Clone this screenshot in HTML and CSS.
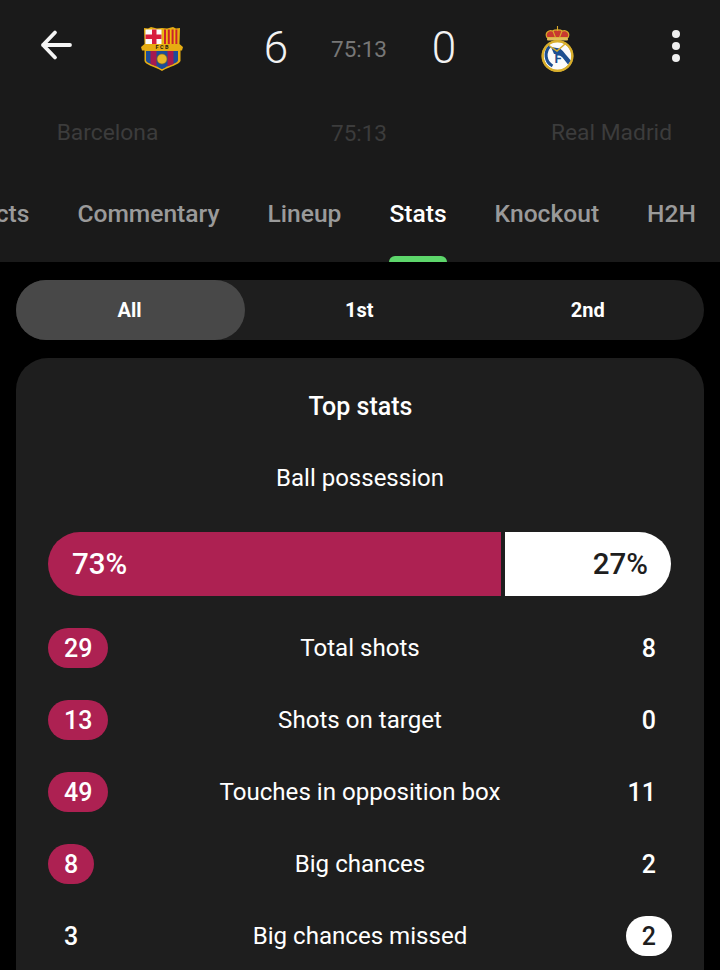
FILE: index.html
```html
<!DOCTYPE html>
<html lang="en">
<head>
<meta charset="utf-8">
<title>Barcelona vs Real Madrid</title>
<link rel="stylesheet" href="styles.css">
</head>
<body>
<header class="match-header">
  <div class="score-row">
    <div class="cell">
      <svg class="back-icon" viewBox="0 0 32 32" width="32" height="32"><path d="M30 16H3M15 3.500 3 16l12 12.500" fill="none" stroke="#f5f5f5" stroke-width="3.800" stroke-linecap="round" stroke-linejoin="round"/></svg>
    </div>
    <div class="cell">
      <svg class="crest" viewBox="0 -1 42 46" width="42" height="46">
        <path d="M3 1l4 .5L10 0l6 1.500L21 1l5 .5L32 0l3 1.500L39 1l-.500 16 3.500 3 -1 3.500h-1.500V34C38 38 29 39 21 44 13 39 4 38 3.500 34V23.500H1L0 20l3.500-3z" fill="#e6ad12"/>
        <rect x="4.500" y="2.500" width="16" height="14.500" fill="#fbfbfb"/>
        <rect x="11" y="2.500" width="4.500" height="14.500" fill="#d81f3f"/>
        <rect x="4.500" y="7.500" width="16" height="4.500" fill="#d81f3f"/>
        <rect x="22" y="2.500" width="15" height="14.500" fill="#eeb90f"/>
        <path d="M24 2.500V17M27.800 2.500V17M31.600 2.500V17M35.400 2.500V17" stroke="#c9222c" stroke-width="2"/>
        <text class="fcb" x="21" y="22.300" text-anchor="middle">F C B</text>
        <path d="M5 24h32v9.500c-.500 3-8.500 4-16 8.500C13.500 37.500 5.500 36.500 5 33.500z" fill="#1c4d99"/>
        <path d="M9.500 24h6v15.500l-6-2.500zM26.500 24h6v13l-6 2.500z" fill="#a61a4f"/>
        <path d="M17.500 24h7v16.500L21 42l-3.500-1.500z" fill="#1c4d99"/>
        <circle cx="21" cy="32" r="5" fill="#e9b92a" stroke="#8a6a10" stroke-width=".6"/>
      </svg>
    </div>
    <div class="cell score">6</div>
    <div class="cell clock">75:13</div>
    <div class="cell score">0</div>
    <div class="cell">
      <svg class="crest" viewBox="0 0 33 46" width="33" height="46">
        <path d="M6 11.500C3.500 7 8 3.500 11.500 5c2-1.500 8-1.500 10 0 3.500-1.500 8 2 5.500 6.500z" fill="#c8392f" stroke="#d9a92b" stroke-width="1.200"/>
        <path d="M16.500 0v5M12 5l2.500 6.500M21 5l-2.500 6.500" stroke="#d9a92b" stroke-width="1.100"/>
        <rect x="6" y="11.500" width="21" height="3" rx="1" fill="#e0bd5c"/>
        <circle cx="16.500" cy="30" r="16" fill="#d8ae2c"/>
        <circle cx="16.500" cy="30" r="13.700" fill="#fbfbfb"/>
        <path d="M9 20c-6 6-5 16 2.500 20" fill="none" stroke="#1d4f91" stroke-width="3"/>
        <path d="M10 21 19 22.500c4 3 7 8 10.800 12L27 38.500 21.500 31.500c-3-3-6-4-8.500-3.500z" fill="#1d4f91"/>
        <path d="M8 19.500l8 5.500 8-7" fill="none" stroke="#d8ae2c" stroke-width="1.500"/>
        <circle cx="16.500" cy="30" r="14.800" fill="none" stroke="#d8ae2c" stroke-width="2"/>
        <text class="rm" x="17" y="37" text-anchor="middle">F</text>
      </svg>
    </div>
    <div class="cell">
      <div class="dots"><span class="dot"></span><span class="dot"></span><span class="dot"></span></div>
    </div>
  </div>
  <div class="names-row">
    <span class="name-text">Barcelona</span>
    <span class="clock-faded">75:13</span>
    <span class="name-text">Real Madrid</span>
  </div>
  <nav class="tabs">
    <div class="tab">Facts</div>
    <div class="tab">Commentary</div>
    <div class="tab">Lineup</div>
    <div class="tab active">Stats<span class="indicator"></span></div>
    <div class="tab">Knockout</div>
    <div class="tab">H2H</div>
  </nav>
</header>
<main class="content">
  <div class="segments">
    <div class="segment selected">All</div>
    <div class="segment">1st</div>
    <div class="segment">2nd</div>
  </div>
  <section class="card">
    <h2 class="card-title">Top stats</h2>
    <div class="possession-label">Ball possession</div>
    <div class="possession-bar">
      <div class="share home">73%</div>
      <div class="share away">27%</div>
    </div>
    <div class="stat"><div class="val left"><span class="pill red">29</span></div><div class="name">Total shots</div><div class="val right"><span class="pill">8</span></div></div>
    <div class="stat"><div class="val left"><span class="pill red">13</span></div><div class="name">Shots on target</div><div class="val right"><span class="pill">0</span></div></div>
    <div class="stat"><div class="val left"><span class="pill red">49</span></div><div class="name">Touches in opposition box</div><div class="val right"><span class="pill">11</span></div></div>
    <div class="stat"><div class="val left"><span class="pill red">8</span></div><div class="name">Big chances</div><div class="val right"><span class="pill">2</span></div></div>
    <div class="stat"><div class="val left"><span class="pill">3</span></div><div class="name">Big chances missed</div><div class="val right"><span class="pill white">2</span></div></div>
  </section>
</main>
</body>
</html>
```
FILE: styles.css
```css
* { box-sizing: border-box; }
html, body { margin: 0; height: 100%; }
body {
  width: 720px;
  height: 970px;
  overflow: hidden;
  background: #000;
  color: #fff;
  font-family: Roboto, "Liberation Sans", sans-serif;
}
.match-header {
  height: 262px;
  background: #1a1a1a;
  overflow: hidden;
}
.score-row {
  display: grid;
  grid-template-columns: 56px 156px 72px 94px 76px 150px 88px;
  padding: 22px 0 0 28px;
  height: 96px;
}
.cell {
  display: flex;
  align-items: flex-start;
  justify-content: center;
}
.back-icon { margin-top: 7px; }
.crest { margin-top: 4px; }
.score {
  font-size: 44px;
  font-weight: 300;
  line-height: 52px;
  color: #f2f2f2;
}
.clock {
  font-size: 22.500px;
  line-height: 26px;
  color: #777;
  padding-top: 14px;
}
.dots {
  display: flex;
  flex-direction: column;
  gap: 4px;
  margin-top: 8px;
}
.dot {
  width: 8px;
  height: 8px;
  border-radius: 50%;
  background: #efefef;
}
.fcb { font: 700 5.500px Roboto, sans-serif; fill: #1a1a1a; }
.rm { font: 700 13px Roboto, sans-serif; fill: #1d4f91; }
.names-row {
  display: grid;
  grid-template-columns: 215px 288px 217px;
  align-items: center;
  text-align: center;
  line-height: 26px;
  color: #3c3c3c;
  padding-top: 24px;
}
.name-text { font-size: 22.800px; }
.clock-faded { font-size: 22.500px; }
.tabs {
  display: flex;
  justify-content: flex-end;
  gap: 48px;
  padding-right: 24px;
  margin-top: 54px;
  height: 62px;
}
.tab {
  flex-shrink: 0;
  display: flex;
  flex-direction: column;
  justify-content: space-between;
  font-size: 24.600px;
  font-weight: 500;
  line-height: 28px;
  color: #9a9a9a;
}
.tab.active { color: #fff; }
.indicator {
  display: block;
  height: 6px;
  background: #5dd66b;
  border-radius: 6px 6px 0 0;
}
.content { padding: 18px 16px 0; }
.segments {
  display: grid;
  grid-template-columns: 229px 1fr 1fr;
  height: 60px;
  padding-right: 2px;
  background: #1e1e1e;
  border-radius: 30px;
}
.segment {
  display: flex;
  align-items: center;
  justify-content: center;
  font-size: 20px;
  font-weight: 700;
  border-radius: 30px;
}
.segment.selected { background: #484848; padding-right: 2px; }
.card {
  margin-top: 18px;
  padding: 0 32px;
  height: 640px;
  background: #1e1e1e;
  border-radius: 32px 32px 0 0;
}
.card-title {
  margin: 0;
  padding: 33px 0 0 1px;
  text-align: center;
  font-size: 25px;
  font-weight: 500;
  line-height: 32px;
}
.possession-label {
  margin-top: 41px;
  text-align: center;
  font-size: 24px;
  line-height: 28px;
}
.possession-bar {
  display: flex;
  gap: 4px;
  height: 64px;
  margin: 40px 1px 32px 0;
}
.share {
  display: flex;
  align-items: center;
  font-size: 29.500px;
  font-weight: 500;
}
.home {
  width: 453px;
  padding-left: 24px;
  background: #ad2152;
  border-radius: 32px 0 0 32px;
}
.away {
  flex: 1;
  justify-content: flex-end;
  padding-right: 23px;
  background: #fff;
  color: #1e1e1e;
  border-radius: 0 32px 32px 0;
}
.stat {
  display: grid;
  grid-template-columns: 80px 1fr 80px;
  align-items: center;
  height: 40px;
  margin-bottom: 32px;
}
.name {
  text-align: center;
  font-size: 24.100px;
  line-height: 28px;
}
.val { display: flex; }
.right { justify-content: flex-end; }
.pill {
  min-width: 46px;
  height: 40px;
  padding: 0 16px;
  display: flex;
  align-items: center;
  justify-content: center;
  border-radius: 20px;
  font-size: 25px;
  font-weight: 500;
}
.pill.red { background: #ad2152; }
.pill.white { background: #fff; color: #1e1e1e; }
```
